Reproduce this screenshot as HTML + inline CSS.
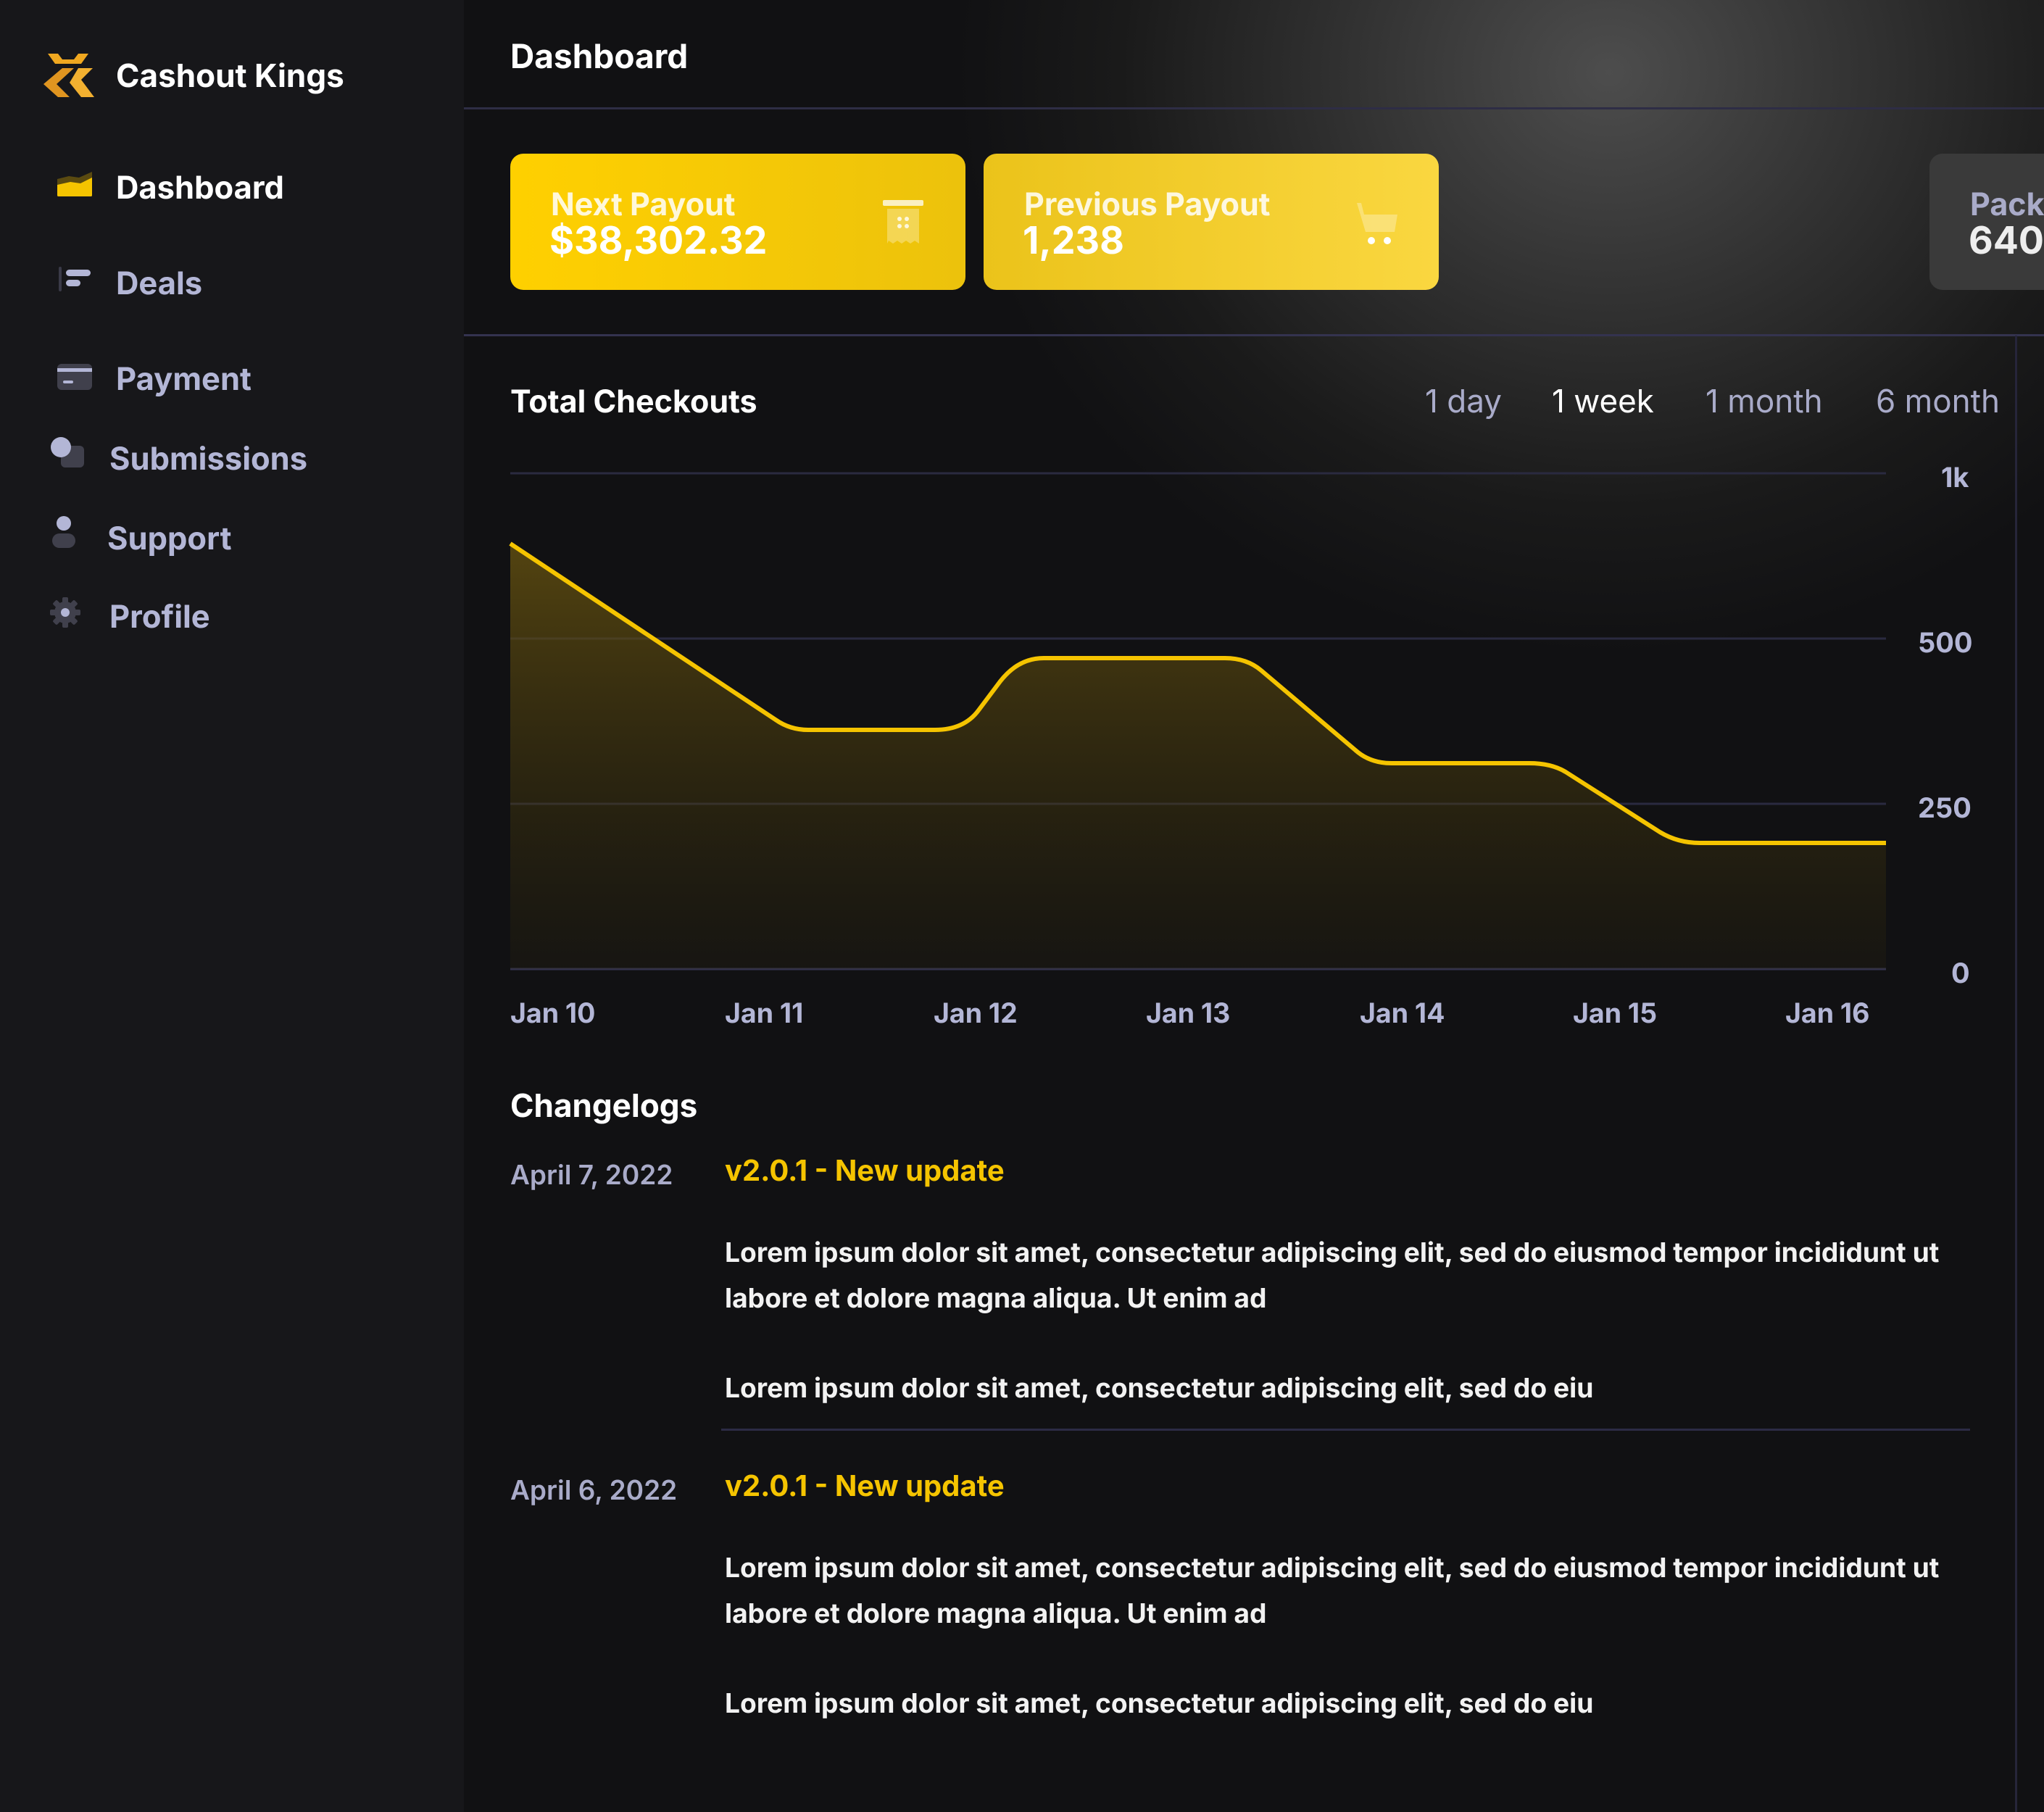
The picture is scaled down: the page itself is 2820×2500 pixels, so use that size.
<!DOCTYPE html>
<html><head><meta charset="utf-8"><style>
*{margin:0;padding:0;box-sizing:border-box}
body{width:2820px;height:2500px;overflow:hidden;background:#111113;font-family:"Inter","Liberation Sans",sans-serif;position:relative}
.abs{position:absolute;white-space:nowrap}
#side{position:absolute;left:0;top:0;width:640px;height:2500px;background:#17171a}
#main{position:absolute;left:640px;top:0;width:2180px;height:2500px;background:radial-gradient(ellipse 900px 800px at 1580px 100px,#4d4d4d 0%,#2e2e2e 45%,#1a1a1a 75%,#111113 100%)}
.nav{font-size:43.5px;font-weight:bold;color:#b3b6d6}
.hl{position:absolute;height:3px;background:#2c2b45}
.card{position:absolute;border-radius:18px}
.ct{font-size:43px;color:rgba(255,255,255,.85);font-weight:bold}
.cv{font-size:52px;color:#fff;font-weight:bold}
.tab{font-size:44px;color:#a9abc9;top:526px}
.yl{font-size:38px;color:#b3b6d6;font-weight:bold}
.xl{font-size:37.5px;color:#b3b6d6;font-weight:bold;top:1376px}
.date{font-size:37px;color:#a9abc9;font-weight:600}
.ttl{font-size:40px;color:#f5c400;font-weight:bold}
.p{font-size:37.2px;color:#f2f2f2;font-weight:bold}
</style></head><body>
<div id="side"></div>
<div id="main"></div>

<!-- logo -->
<svg class="abs" style="left:56px;top:70px" width="76" height="68" viewBox="0 0 76 68">
<polygon points="10,4 24,4 30,12 46,12 52,4 66,4 56,18 20,18" fill="#f0a820"/>
<polygon points="30,24 46,24 22,46 40,64 24,64 4,46" fill="#e09520"/>
<polygon points="52,24 72,24 56,40 74,64 56,64 40,44" fill="#f2b030"/>
</svg>
<div class="abs" style="left:160px;top:77px;font-size:44px;font-weight:bold;color:#fff">Cashout Kings</div>

<!-- nav -->
<svg class="abs" style="left:79px;top:235px" width="48" height="36"><path d="M0 12 L16 8 L30 10 L48 2 L48 36 L0 36Z" fill="#5a4a10"/><path d="M0 20 L18 16 L32 18 L48 10 L48 34 Q48 36 46 36 L2 36 Q0 36 0 34Z" fill="#f5c400"/></svg>
<div class="abs nav" style="left:160px;top:233px;color:#fff">Dashboard</div>

<svg class="abs" style="left:81px;top:368px" width="44" height="34"><rect x="0" y="0" width="4" height="34" rx="2" fill="#3a3a48"/><rect x="10" y="4" width="34" height="9" rx="4.5" fill="#b3b6d6"/><rect x="10" y="18" width="20" height="9" rx="4.5" fill="#b3b6d6"/></svg>
<div class="abs nav" style="left:160px;top:365px">Deals</div>

<svg class="abs" style="left:79px;top:502px" width="48" height="36"><rect width="48" height="36" rx="6" fill="#40404c"/><rect y="6" width="48" height="5" fill="#b3b6d6"/><rect x="8" y="23" width="14" height="4" rx="2" fill="#b3b6d6"/></svg>
<div class="abs nav" style="left:160px;top:497px">Payment</div>

<svg class="abs" style="left:70px;top:603px" width="46" height="42"><rect x="14" y="12" width="32" height="30" rx="6" fill="#40404c"/><circle cx="14" cy="14" r="14" fill="#b3b6d6"/></svg>
<div class="abs nav" style="left:151px;top:607px">Submissions</div>

<svg class="abs" style="left:72px;top:712px" width="32" height="44"><circle cx="16" cy="10" r="10" fill="#b3b6d6"/><rect x="0" y="24" width="32" height="20" rx="10" fill="#40404c"/></svg>
<div class="abs nav" style="left:148px;top:717px">Support</div>

<svg class="abs" style="left:69px;top:824px" width="42" height="42" viewBox="0 0 42 42"><g fill="#40404c"><circle cx="21" cy="21" r="15"/><rect x="17" y="0" width="8" height="42" rx="2"/><rect x="0" y="17" width="42" height="8" rx="2"/><rect x="17" y="0" width="8" height="42" rx="2" transform="rotate(45 21 21)"/><rect x="17" y="0" width="8" height="42" rx="2" transform="rotate(-45 21 21)"/></g><circle cx="21" cy="21" r="6" fill="#b3b6d6"/></svg>
<div class="abs nav" style="left:151px;top:825px">Profile</div>

<!-- header -->
<div class="abs" style="left:704px;top:50px;font-size:46px;font-weight:bold;color:#fff">Dashboard</div>
<div class="hl" style="left:640px;top:148px;width:2180px;background:#2e2d45"></div>

<!-- cards -->
<div class="card" style="left:704px;top:212px;width:628px;height:188px;background:linear-gradient(90deg,#ffd000,#ecc20c)"></div>
<div class="abs ct" style="left:760px;top:256px">Next Payout</div>
<div class="abs cv" style="left:758px;top:300px">$38,302.32</div>
<svg class="abs" style="left:1218px;top:276px" width="58" height="60"><rect x="0" y="0" width="56" height="8" rx="2" fill="rgba(255,255,255,.75)"/><path d="M6 12 H50 V60 L44 56 L38 60 L32 56 L26 60 L20 56 L14 60 L8 56 L6 60Z" fill="rgba(255,255,255,.3)"/><g fill="rgba(255,255,255,.8)"><circle cx="23" cy="26" r="3"/><circle cx="33" cy="26" r="3"/><circle cx="23" cy="36" r="3"/><circle cx="33" cy="36" r="3"/></g></svg>

<div class="card" style="left:1357px;top:212px;width:628px;height:188px;background:linear-gradient(90deg,#ebc31a,#fad740)"></div>
<div class="abs ct" style="left:1413px;top:256px">Previous Payout</div>
<div class="abs cv" style="left:1411px;top:300px">1,238</div>
<svg class="abs" style="left:1870px;top:276px" width="60" height="64"><path d="M2 4 L8 4 L12 20 L58 20 L54 44 L14 44Z" fill="rgba(255,255,255,.3)"/><circle cx="22" cy="56" r="5" fill="#fff"/><circle cx="44" cy="56" r="5" fill="#fff"/></svg>

<div class="card" style="left:2662px;top:212px;width:200px;height:188px;background:#3a3a3a"></div>
<div class="abs ct" style="left:2718px;top:256px;color:#a9abc9">Pack</div>
<div class="abs cv" style="left:2716px;top:300px;color:#eee">640</div>

<div class="hl" style="left:640px;top:461px;width:2180px;background:#34334f"></div>
<div style="position:absolute;left:2780px;top:463px;width:3px;height:2037px;background:#26253a"></div>

<!-- chart header -->
<div class="abs" style="left:704px;top:528px;font-size:43px;font-weight:bold;color:#fff">Total Checkouts</div>
<div class="abs tab" style="left:1966px">1 day</div>
<div class="abs tab" style="left:2141px;color:#fff">1 week</div>
<div class="abs tab" style="left:2353px">1 month</div>
<div class="abs tab" style="left:2588px">6 month</div>

<!-- chart -->
<svg class="abs" style="left:0;top:0" width="2820" height="1500">
<defs><linearGradient id="g" x1="0" y1="0" x2="0" y2="1"><stop offset="0" stop-color="#6a5510" stop-opacity=".75"/><stop offset="1" stop-color="#3a300a" stop-opacity=".15"/></linearGradient></defs>
<g stroke="#2a2a40" stroke-width="3"><line x1="704" y1="653" x2="2602" y2="653"/><line x1="704" y1="881" x2="2602" y2="881"/><line x1="704" y1="1109" x2="2602" y2="1109"/><line x1="704" y1="1337" x2="2602" y2="1337" stroke="#33324d"/></g>
<path d="M704 750 L1070 993 Q1090 1007 1115 1007 L1290 1007 Q1330 1007 1350 980 L1380 940 Q1405 908 1440 908 L1690 908 Q1720 908 1740 925 L1870 1035 Q1890 1053 1920 1053 L2110 1053 Q2140 1053 2160 1065 L2290 1148 Q2315 1163 2345 1163 L2602 1163 L2602 1337 L704 1337Z" fill="url(#g)"/>
<path d="M704 750 L1070 993 Q1090 1007 1115 1007 L1290 1007 Q1330 1007 1350 980 L1380 940 Q1405 908 1440 908 L1690 908 Q1720 908 1740 925 L1870 1035 Q1890 1053 1920 1053 L2110 1053 Q2140 1053 2160 1065 L2290 1148 Q2315 1163 2345 1163 L2602 1163" fill="none" stroke="#f5c400" stroke-width="6"/>
</svg>
<div class="abs yl" style="left:2678px;top:636px">1k</div>
<div class="abs yl" style="left:2646px;top:864px">500</div>
<div class="abs yl" style="left:2646px;top:1092px">250</div>
<div class="abs yl" style="left:2692px;top:1320px">0</div>
<div class="abs xl" style="left:704px">Jan 10</div>
<div class="abs xl" style="left:1000px">Jan 11</div>
<div class="abs xl" style="left:1288px">Jan 12</div>
<div class="abs xl" style="left:1581px">Jan 13</div>
<div class="abs xl" style="left:1876px">Jan 14</div>
<div class="abs xl" style="left:2170px">Jan 15</div>
<div class="abs xl" style="left:2463px">Jan 16</div>

<!-- changelogs -->
<div class="abs" style="left:704px;top:1498px;font-size:44px;font-weight:bold;color:#fff">Changelogs</div>

<div class="abs date" style="left:704px;top:1598px">April 7, 2022</div>
<div class="abs ttl" style="left:1000px;top:1590px">v2.0.1 - New update</div>
<div class="abs p" style="left:1000px;top:1705px">Lorem ipsum dolor sit amet, consectetur adipiscing elit, sed do eiusmod tempor incididunt ut</div>
<div class="abs p" style="left:1000px;top:1768px">labore et dolore magna aliqua. Ut enim ad</div>
<div class="abs p" style="left:1000px;top:1892px">Lorem ipsum dolor sit amet, consectetur adipiscing elit, sed do eiu</div>
<div class="hl" style="left:995px;top:1971px;width:1723px"></div>

<div class="abs date" style="left:704px;top:2033px">April 6, 2022</div>
<div class="abs ttl" style="left:1000px;top:2025px">v2.0.1 - New update</div>
<div class="abs p" style="left:1000px;top:2140px">Lorem ipsum dolor sit amet, consectetur adipiscing elit, sed do eiusmod tempor incididunt ut</div>
<div class="abs p" style="left:1000px;top:2203px">labore et dolore magna aliqua. Ut enim ad</div>
<div class="abs p" style="left:1000px;top:2327px">Lorem ipsum dolor sit amet, consectetur adipiscing elit, sed do eiu</div>
</body></html>
